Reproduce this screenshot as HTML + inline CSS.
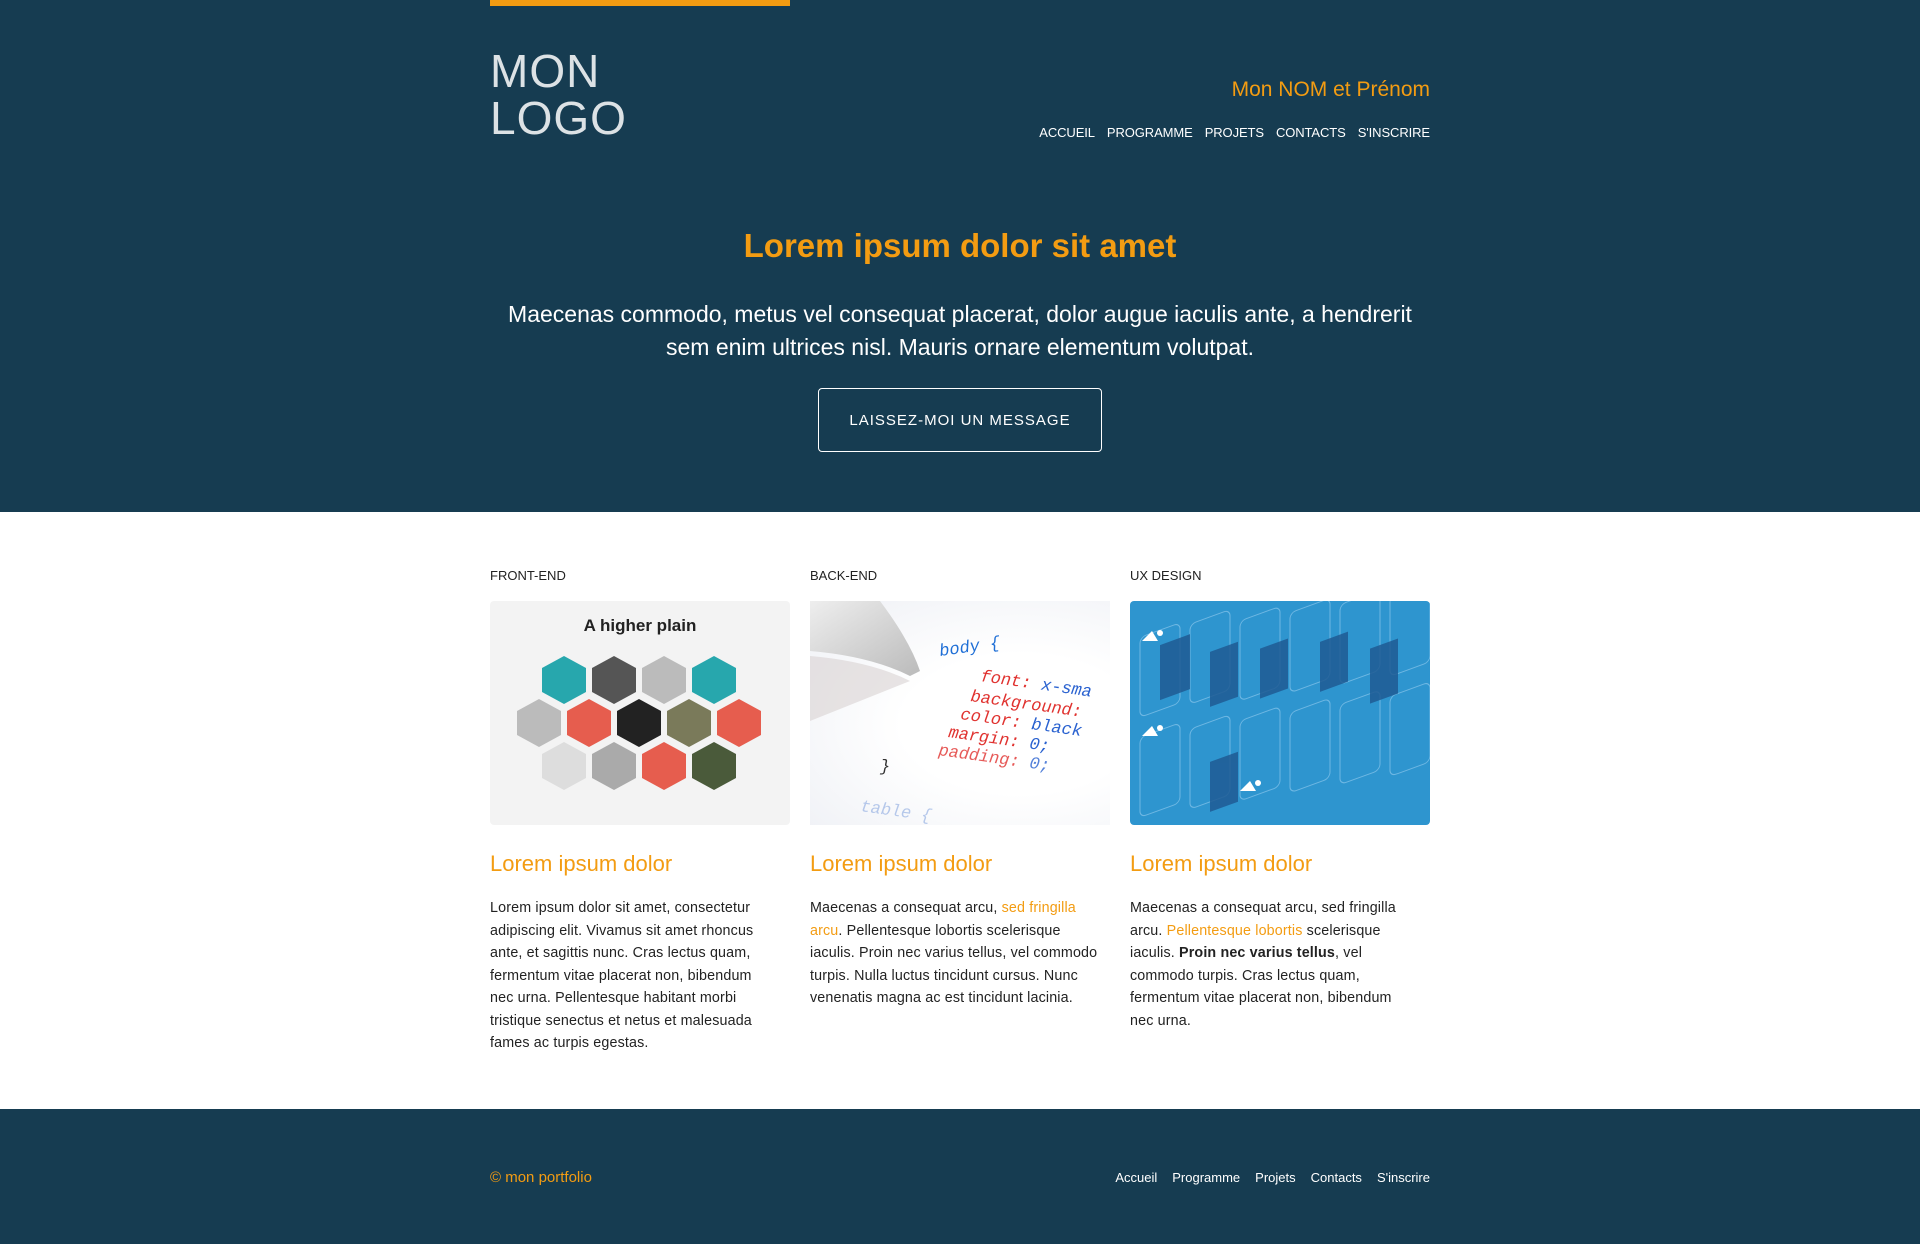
<!DOCTYPE html>
<html><head><meta charset="utf-8">
<style>
*{margin:0;padding:0;box-sizing:border-box}
body{width:1920px;height:1244px;font-family:"Liberation Sans",sans-serif;background:#fff;overflow:hidden;position:relative}
.dark{background:#163c51}
header{position:absolute;left:0;top:0;width:1920px;height:512px}
.bar{position:absolute;left:490px;top:0;width:300px;height:6px;background:#f39c12}
.logo{position:absolute;left:490px;top:48px;color:rgba(255,255,255,.85);font-size:46px;line-height:47px;letter-spacing:1px}
.name{position:absolute;right:490px;top:78px;color:#f39c12;font-size:21px}
nav{position:absolute;right:490px;top:125px;color:#fff;font-size:13px;display:flex;gap:12px;letter-spacing:-.1px}
h1{position:absolute;left:0;width:1920px;top:227px;text-align:center;color:#f39c12;font-size:33px;font-weight:bold}
.lead{position:absolute;left:0;width:1920px;top:298px;text-align:center;color:#fff;font-size:23px;line-height:33px}
.btn{position:absolute;left:818px;top:388px;width:284px;height:64px;border:1px solid #fff;border-radius:4px;color:#fff;font-size:15px;letter-spacing:1px;text-align:center;line-height:64px}
.col{position:absolute;top:568px;width:300px}
.lbl{font-size:13px;color:#222;height:33px}
.img{width:300px;height:224px;border-radius:4px;overflow:hidden;position:relative}
h3{color:#f39c12;font-size:22px;font-weight:normal;margin-top:26px;height:46px}
.txt{font-size:14.3px;line-height:22.5px;color:#222;letter-spacing:.15px}
.o{color:#f39c12}
footer{position:absolute;left:0;top:1109px;width:1920px;height:135px}
.copy{position:absolute;left:490px;top:1169px;color:#f39c12;font-size:15px}
.fnav{position:absolute;right:490px;top:1170px;color:#fff;font-size:13px;display:flex;gap:15px}
</style></head><body>
<header class="dark">
<div class="bar"></div>
<div class="logo">MON<br>LOGO</div>
<div class="name">Mon NOM et Prénom</div>
<nav><span>ACCUEIL</span><span>PROGRAMME</span><span>PROJETS</span><span>CONTACTS</span><span>S'INSCRIRE</span></nav>
<h1>Lorem ipsum dolor sit amet</h1>
<div class="lead">Maecenas commodo, metus vel consequat placerat, dolor augue iaculis ante, a hendrerit<br>sem enim ultrices nisl. Mauris ornare elementum volutpat.</div>
<div class="btn">LAISSEZ-MOI UN MESSAGE</div>
</header>

<div class="col" style="left:490px">
<div class="lbl">FRONT-END</div>
<div class="img" style="background:#f3f3f3">
<svg width="300" height="224" viewBox="0 0 300 224">
<text x="150" y="30" text-anchor="middle" font-family="Liberation Sans" font-weight="bold" font-size="17" fill="#222">A higher plain</text>
<g>
<polygon points="74,55 96,67 96,91 74,103 52,91 52,67" fill="#27a7ad"/>
<polygon points="124,55 146,67 146,91 124,103 102,91 102,67" fill="#555"/>
<polygon points="174,55 196,67 196,91 174,103 152,91 152,67" fill="#bbb"/>
<polygon points="224,55 246,67 246,91 224,103 202,91 202,67" fill="#27a7ad"/>
<polygon points="49,98 71,110 71,134 49,146 27,134 27,110" fill="#bbb"/>
<polygon points="99,98 121,110 121,134 99,146 77,134 77,110" fill="#e65d4e"/>
<polygon points="149,98 171,110 171,134 149,146 127,134 127,110" fill="#222"/>
<polygon points="199,98 221,110 221,134 199,146 177,134 177,110" fill="#7a7a5a"/>
<polygon points="249,98 271,110 271,134 249,146 227,134 227,110" fill="#e65d4e"/>
<polygon points="74,141 96,153 96,177 74,189 52,177 52,153" fill="#ddd"/>
<polygon points="124,141 146,153 146,177 124,189 102,177 102,153" fill="#aaa"/>
<polygon points="174,141 196,153 196,177 174,189 152,177 152,153" fill="#e65d4e"/>
<polygon points="224,141 246,153 246,177 224,189 202,177 202,153" fill="#4a5a3a"/>
</g>
</svg>
</div>
<h3>Lorem ipsum dolor</h3>
<div class="txt">Lorem ipsum dolor sit amet, consectetur<br>adipiscing elit. Vivamus sit amet rhoncus<br>ante, et sagittis nunc. Cras lectus quam,<br>fermentum vitae placerat non, bibendum<br>nec urna. Pellentesque habitant morbi<br>tristique senectus et netus et malesuada<br>fames ac turpis egestas.</div>
</div>

<div class="col" style="left:810px">
<div class="lbl">BACK-END</div>
<div class="img" style="background:radial-gradient(ellipse at 70% 55%,#fff 40%,#eef0f5 100%);border-radius:0">
<svg width="300" height="224" viewBox="0 0 300 224">
<defs><linearGradient id="p" x1="0" y1="0" x2="1" y2="1"><stop offset="0" stop-color="#eee"/><stop offset="1" stop-color="#bbb"/></linearGradient></defs>
<path d="M0,0 L70,0 Q100,40 110,70 L100,75 Q60,55 0,50 Z" fill="url(#p)"/>
<path d="M0,55 Q60,60 100,80 L0,120 Z" fill="#d8d2d2" opacity=".6"/>
<g font-family="Liberation Mono" font-style="italic" font-size="17">
<text x="130" y="55" fill="#1f6fd6" transform="rotate(-8 130 55)">body {</text>
<text x="170" y="80" fill="#e0322f" transform="rotate(8 170 80)">font: <tspan fill="#2a62d0">x-sma</tspan></text>
<text x="160" y="100" fill="#e0322f" transform="rotate(8 160 100)">background:</text>
<text x="150" y="118" fill="#e0322f" transform="rotate(8 150 118)">color: <tspan fill="#2a62d0">black</tspan></text>
<text x="138" y="136" fill="#e0322f" transform="rotate(8 138 136)">margin: <tspan fill="#2a62d0">0;</tspan></text>
<text x="128" y="154" fill="#e0322f" opacity=".8" transform="rotate(8 128 154)">padding: <tspan fill="#2a62d0">0;</tspan></text>
<text x="70" y="170" fill="#333">}</text>
<text x="50" y="210" fill="#8aa8e0" opacity=".6" transform="rotate(8 50 210)">table {</text>
</g>
</svg>
</div>
<h3>Lorem ipsum dolor</h3>
<div class="txt">Maecenas a consequat arcu, <span class="o">sed fringilla<br>arcu</span>. Pellentesque lobortis scelerisque<br>iaculis. Proin nec varius tellus, vel commodo<br>turpis. Nulla luctus tincidunt cursus. Nunc<br>venenatis magna ac est tincidunt lacinia.</div>
</div>

<div class="col" style="left:1130px">
<div class="lbl">UX DESIGN</div>
<div class="img" style="background:#2e95cf">
<svg width="300" height="224" viewBox="0 0 300 224">
<g fill="none" stroke="#7fc0e8" stroke-width="1" opacity=".8">
<g transform="skewY(-20)">
<rect x="10" y="40" width="40" height="80" rx="6"/><rect x="60" y="45" width="40" height="80" rx="6"/><rect x="110" y="60" width="40" height="80" rx="6"/><rect x="160" y="70" width="40" height="80" rx="6"/><rect x="210" y="80" width="40" height="80" rx="6"/><rect x="260" y="90" width="40" height="80" rx="6"/>
<rect x="10" y="140" width="40" height="80" rx="6"/><rect x="60" y="150" width="40" height="80" rx="6"/><rect x="110" y="160" width="40" height="80" rx="6"/><rect x="160" y="170" width="40" height="80" rx="6"/><rect x="210" y="180" width="40" height="80" rx="6"/><rect x="260" y="190" width="40" height="80" rx="6"/>
</g></g>
<g fill="#1f5b94" opacity=".85" transform="skewY(-20)">
<rect x="30" y="55" width="30" height="55"/><rect x="80" y="80" width="28" height="55"/><rect x="130" y="95" width="28" height="50"/><rect x="190" y="110" width="28" height="50"/><rect x="240" y="135" width="28" height="55"/><rect x="80" y="190" width="28" height="50"/>
</g>
<g fill="#fff"><polygon points="12,40 22,30 28,40"/><circle cx="30" cy="32" r="3"/><polygon points="12,135 22,125 28,135"/><circle cx="30" cy="127" r="3"/><polygon points="110,190 120,180 126,190"/><circle cx="128" cy="182" r="3"/></g>
</svg>
</div>
<h3>Lorem ipsum dolor</h3>
<div class="txt">Maecenas a consequat arcu, sed fringilla<br>arcu. <span class="o">Pellentesque lobortis</span> scelerisque<br>iaculis. <b>Proin nec varius tellus</b>, vel<br>commodo turpis. Cras lectus quam,<br>fermentum vitae placerat non, bibendum<br>nec urna.</div>
</div>

<footer class="dark"></footer>
<div class="copy">© mon portfolio</div>
<div class="fnav"><span>Accueil</span><span>Programme</span><span>Projets</span><span>Contacts</span><span>S'inscrire</span></div>
</body></html>
